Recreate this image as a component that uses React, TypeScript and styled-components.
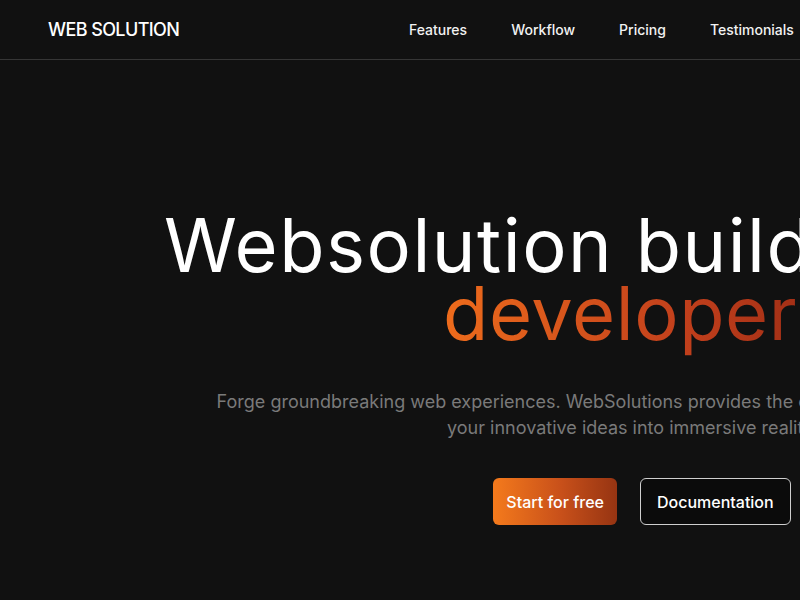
import React from 'react';
import styled, { createGlobalStyle } from 'styled-components';

const GlobalStyle = createGlobalStyle`
    html, body {
        margin: 0;
        padding: 0;
        background-color: #111111;
        overflow: hidden;
    }

    body {
        font-family: Inter, "Open Sans", sans-serif;
        color: #ffffff;
    }

    * {
        box-sizing: border-box;
    }
`;

const navLinks = ['Features', 'Workflow', 'Pricing', 'Testimonials', 'FAQ'];

const Page = styled.div`
    width: 1280px;
    min-height: 600px;
    background-color: #111111;
`;

const Header = styled.header`
    height: 60px;
    padding: 0 48px;
    display: grid;
    grid-template-columns: 1fr auto 1fr;
    align-items: center;
    border-bottom: 1px solid #363636;
`;

const Logo = styled.div`
    font-size: 18px;
    font-weight: 500;
    letter-spacing: -0.6px;
    color: #ffffff;
`;

const Nav = styled.nav`
    display: flex;
    gap: 44px;
    margin-right: 6px;
`;

const NavLink = styled.a`
    font-size: 14px;
    font-weight: 500;
    color: #f2f2f2;
    text-decoration: none;
    cursor: pointer;
`;

const Hero = styled.section`
    display: flex;
    flex-direction: column;
    align-items: center;
    text-align: center;
    padding-top: 151px;
`;

const Title = styled.h1`
    margin: 0;
    font-size: 74px;
    font-weight: 400;
    line-height: 68px;
    letter-spacing: 1.5px;
    white-space: nowrap;
`;

const Highlight = styled.span`
    letter-spacing: 0.6px;
    background: linear-gradient(90deg, #ee6c1c 0%, #c2401c 60%, #9a2a14 100%);
    -webkit-background-clip: text;
    background-clip: text;
    color: transparent;
`;

const Lead = styled.p`
    margin: 42px 0 0;
    font-size: 18px;
    line-height: 26px;
    color: #7a7a7a;
    white-space: nowrap;
`;

const Actions = styled.div`
    display: flex;
    gap: 23px;
    margin: 37px 0 0 4px;
`;

const Button = styled.button<{ $primary?: boolean }>`
    height: 47px;
    padding: ${(p) => (p.$primary ? '0 13px' : '0 16px')};
    border-radius: 6px;
    font-family: inherit;
    font-size: 16px;
    font-weight: 500;
    color: #ffffff;
    cursor: pointer;
    border: ${(p) => (p.$primary ? 'none' : '1px solid #cfcfcf')};
    background: ${(p) =>
        p.$primary ? 'linear-gradient(90deg, #f47a1c 0%, #c8501a 55%, #963412 100%)' : '#0b0b0b'};
`;

const App = () => {
    return (
        <>
            <GlobalStyle />
            <Page>
                <Header>
                    <Logo>WEB SOLUTION</Logo>
                    <Nav>
                        {navLinks.map((link) => (
                            <NavLink key={link}>{link}</NavLink>
                        ))}
                    </Nav>
                    <div />
                </Header>

                <Hero>
                    <Title>
                        Websolution builds for the
                        <br />
                        <Highlight>developers</Highlight>
                    </Title>
                    <Lead>
                        Forge groundbreaking web experiences. WebSolutions provides the cutting-edge tools to transform
                        <br />
                        your innovative ideas into immersive realities.
                    </Lead>
                    <Actions>
                        <Button $primary>Start for free</Button>
                        <Button>Documentation</Button>
                    </Actions>
                </Hero>
            </Page>
        </>
    );
};

export default App;
